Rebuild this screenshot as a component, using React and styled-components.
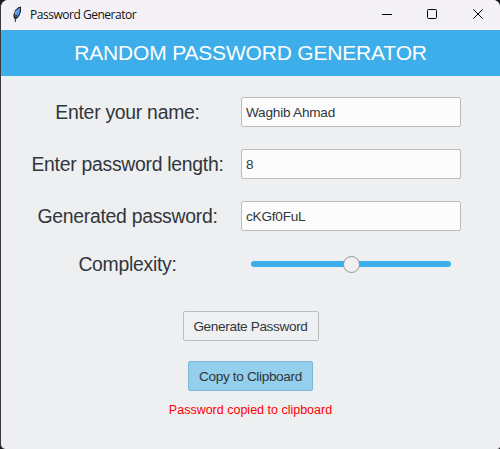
import React from "react";
import styled, { createGlobalStyle } from "styled-components";

const GlobalStyle = createGlobalStyle`
  * { box-sizing: border-box; }
  body { margin: 0; background: #1c1b1d; }
`;

const Window = styled.main`
  display: flex;
  flex-direction: column;
  width: 500px;
  height: 449px;
  overflow: hidden;
  border-left: 1px solid #3a393b;
  border-radius: 8px 7px 3px 5px;
  background: #eeeff1;
  color: #31363b;
  font-family: "Liberation Sans", Arial, sans-serif;
`;

const TitleBar = styled.header`
  display: flex;
  align-items: center;
  flex: 0 0 30px;
  padding-left: 9px;
  padding-right: 17px;
  background: #f4f2f6;
`;

const Title = styled.span`
  flex: 1;
  margin-left: 5px;
  color: #111;
  font: 12px/16px "Open Sans", sans-serif;
  letter-spacing: -0.48px;
  white-space: nowrap;
`;

const WindowControls = styled.div`
  display: grid;
  grid-template-columns: 45px 46px 10px;
  align-self: flex-start;
`;

const WindowButton = styled.button`
  display: flex;
  align-items: center;
  width: 10px;
  height: 28px;
  padding: 0;
  border: 0;
  background: none;
`;

const Banner = styled.h1`
  flex: 0 0 46px;
  margin: 0;
  background: #3daee9;
  color: #fff;
  font-size: 21px;
  font-weight: 400;
  line-height: 46px;
  letter-spacing: -0.18px;
  text-align: center;
  white-space: nowrap;
`;

const Form = styled.div`
  display: grid;
  grid-template-columns: 193px 220px;
  grid-template-rows: repeat(3, 30px) 22px;
  column-gap: 17px;
  row-gap: 22px;
  padding: 21px 0 0 30px;
`;

const Label = styled.label`
  align-self: center;
  font-size: 19.4px;
  line-height: 22px;
  letter-spacing: -0.28px;
  text-align: center;
  white-space: nowrap;
`;

const Entry = styled.input`
  width: 220px;
  height: 30px;
  padding: 1px 4px 0;
  border: 1px solid #bbbdbf;
  border-radius: 2px;
  outline: 0;
  background: #fcfcfc;
  color: #31363b;
  font: 13.6px "Liberation Sans", Arial, sans-serif;
  letter-spacing: -0.22px;
`;

const Slider = styled.input`
  appearance: none;
  align-self: center;
  justify-self: center;
  width: 200px;
  height: 18px;
  margin: 0;
  background: none;

  &::-webkit-slider-runnable-track {
    height: 6px;
    border-radius: 3px;
    background: #3daee9;
  }

  &::-webkit-slider-thumb {
    appearance: none;
    width: 17px;
    height: 17px;
    margin-top: -5.5px;
    border: 1px solid #929496;
    border-radius: 50%;
    background: #eff0f1;
  }
`;

const Actions = styled.div`
  display: flex;
  flex-direction: column;
  align-items: center;
  gap: 20px;
  padding-top: 36px;
`;

const Button = styled.button`
  width: ${({ $width }) => $width}px;
  height: 30px;
  padding: 1px 0 0;
  border: 1px solid ${({ $active }) => ($active ? "#7eb6d1" : "#bbbdbf")};
  border-radius: 2px;
  background: ${({ $active }) => ($active ? "#94cfeb" : "#eff0f1")};
  color: #31363b;
  font: 13.6px "Liberation Sans", Arial, sans-serif;
  letter-spacing: -0.35px;
  white-space: nowrap;
`;

const Status = styled.p`
  margin: 11px 0 0;
  color: #ff0000;
  font-size: 12.5px;
  line-height: 16px;
  text-align: center;
`;

function FeatherIcon() {
  return (
    <svg width="15" height="18" viewBox="0 0 15 18" aria-hidden="true">
      <path d="M8.3 1.2 11 .5 11 5.5 9.5 9.5 7 12.8 3.9 12.6 3.4 9 5.2 4.2Z" fill="#101923" />
      <path d="M9.8 1.4 10.2 5 8.8 8.8 6.8 11.5 4.8 11.5 6 7 8 3Z" fill="#4b96ee" />
      <path d="M8.3 2.5 5.4 5.5 4.4 9.5 6.2 7.2Z" fill="#9fbde0" />
      <path d="M6.8 9 5.6 12 5.2 16" fill="none" stroke="#101923" strokeWidth="0.9" />
    </svg>
  );
}

export default function App() {
  return (
    <>
      <GlobalStyle />
      <Window>
        <TitleBar>
          <FeatherIcon />
          <Title>Password Generator</Title>
          <WindowControls>
            <WindowButton aria-label="Minimize">
              <svg width="10" height="10"><path d="M0 5.5h10" stroke="#000" /></svg>
            </WindowButton>
            <WindowButton aria-label="Maximize">
              <svg width="10" height="10">
                <rect x=".5" y=".5" width="9" height="9" rx="1" fill="none" stroke="#000" />
              </svg>
            </WindowButton>
            <WindowButton aria-label="Close">
              <svg width="10" height="10"><path d="m.3.3 9.4 9.4M9.7.3.3 9.7" stroke="#000" /></svg>
            </WindowButton>
          </WindowControls>
        </TitleBar>
        <Banner>RANDOM PASSWORD GENERATOR</Banner>
        <Form>
          <Label htmlFor="name">Enter your name:</Label>
          <Entry id="name" defaultValue="Waghib Ahmad" />
          <Label htmlFor="length">Enter password length:</Label>
          <Entry id="length" defaultValue="8" />
          <Label htmlFor="password">Generated password:</Label>
          <Entry id="password" defaultValue="cKGf0FuL" />
          <Label htmlFor="complexity">Complexity:</Label>
          <Slider id="complexity" type="range" min="0" max="2" defaultValue="1" />
        </Form>
        <Actions>
          <Button $width={136}>Generate Password</Button>
          <Button $width={125} $active>Copy to Clipboard</Button>
        </Actions>
        <Status>Password copied to clipboard</Status>
      </Window>
    </>
  );
}
